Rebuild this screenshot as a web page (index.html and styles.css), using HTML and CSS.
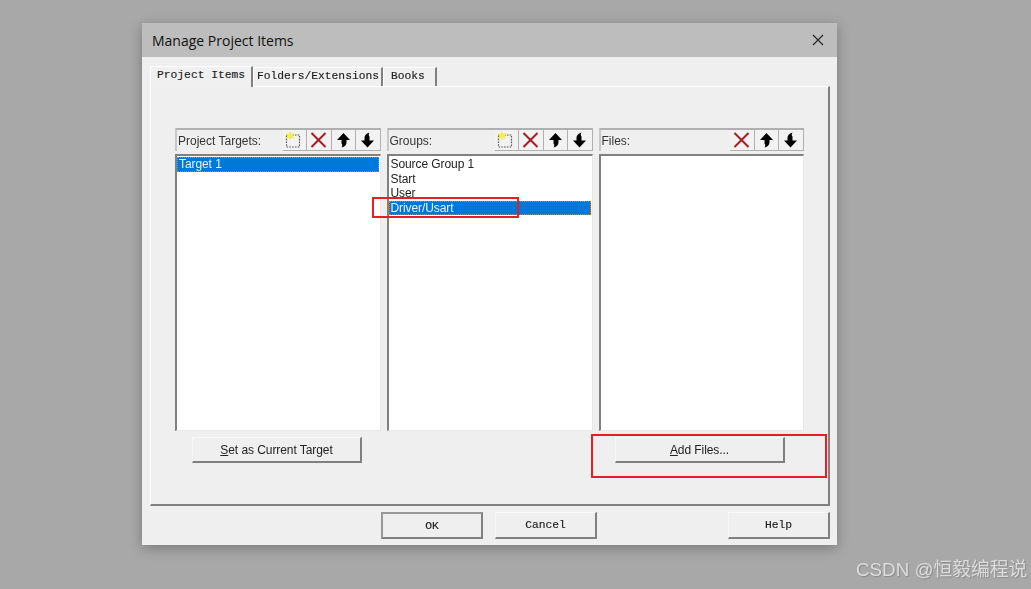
FILE: index.html
```html
<!DOCTYPE html>
<html lang="en">
<head>
<meta charset="utf-8">
<title>Manage Project Items</title>
<link rel="stylesheet" href="styles.css">
</head>
<body>
<svg class="defs" width="0" height="0" aria-hidden="true">
  <defs>
    <symbol id="i-new" viewBox="0 0 20 20">
      <rect x="2.500" y="5" width="13" height="12" fill="none" stroke="#555" stroke-width="1.2" stroke-dasharray="1.6 1.2"/>
      <path d="M6 1 7.200 3.800 10.500 3 8.500 5.800 10.500 8.500 7.200 7.800 6 11 4.800 7.800 1.500 8.500 3.500 5.800 1.500 3 4.800 3.800Z" fill="#eef04e"/>
    </symbol>
    <symbol id="i-del" viewBox="0 0 20 20">
      <path d="M2.500 3 16.500 17M16.500 3 2.500 17" fill="none" stroke="#a51c24" stroke-width="2"/>
    </symbol>
    <symbol id="i-up" viewBox="0 0 20 20">
      <path d="M10.500 3 17 10H13.500V12C13.500 15 12 16.500 8.500 17.500 9.500 16 9.500 14.500 8.500 13.500V10H4Z" fill="#000"/>
    </symbol>
    <symbol id="i-down" viewBox="0 0 20 20">
      <path d="M9.500 17.500 3 10.500H6.500V8C6.500 5.500 8 3.500 11.500 2.500 10.500 4 10.500 5.500 11.500 6.500V10.500H16Z" fill="#000"/>
    </symbol>
  </defs>
</svg>
<main class="dialog">
  <header class="titlebar">
    <span class="title">Manage Project Items</span>
    <svg class="close" width="14" height="14" viewBox="0 0 14 14"><path d="M2 2 12 12M12 2 2 12" stroke="#222" stroke-width="1.100" fill="none"/></svg>
  </header>
  <div class="content">
    <nav class="tabs">
      <span class="tab tab-active">Project Items</span>
      <span class="tab tab-folders">Folders/Extensions</span>
      <span class="tab tab-books">Books</span>
    </nav>
    <section class="panel">
      <div class="columns">
        <div class="col">
          <div class="col-head">
            <span class="col-label">Project Targets:</span>
            <span class="tools">
              <span class="tool"><svg width="20" height="20"><use href="#i-new"/></svg></span>
              <span class="tool"><svg width="20" height="20"><use href="#i-del"/></svg></span>
              <span class="tool"><svg width="20" height="20"><use href="#i-up"/></svg></span>
              <span class="tool"><svg width="20" height="20"><use href="#i-down"/></svg></span>
            </span>
          </div>
          <ul class="list">
            <li class="selected">Target 1</li>
          </ul>
        </div>
        <div class="col">
          <div class="col-head">
            <span class="col-label">Groups:</span>
            <span class="tools">
              <span class="tool"><svg width="20" height="20"><use href="#i-new"/></svg></span>
              <span class="tool"><svg width="20" height="20"><use href="#i-del"/></svg></span>
              <span class="tool"><svg width="20" height="20"><use href="#i-up"/></svg></span>
              <span class="tool"><svg width="20" height="20"><use href="#i-down"/></svg></span>
            </span>
          </div>
          <ul class="list">
            <li>Source Group 1</li>
            <li>Start</li>
            <li>User</li>
            <li class="selected">Driver/Usart</li>
          </ul>
        </div>
        <div class="col">
          <div class="col-head">
            <span class="col-label">Files:</span>
            <span class="tools">
              <span class="tool"><svg width="20" height="20"><use href="#i-del"/></svg></span>
              <span class="tool"><svg width="20" height="20"><use href="#i-up"/></svg></span>
              <span class="tool"><svg width="20" height="20"><use href="#i-down"/></svg></span>
            </span>
          </div>
          <ul class="list"></ul>
        </div>
      </div>
      <div class="actions">
        <button class="btn btn-sans btn-target"><span><u>S</u>et as Current Target</span></button>
        <button class="btn btn-sans btn-add"><span><u>A</u>dd Files...</span></button>
      </div>
    </section>
    <footer class="footer">
      <button class="btn btn-mono btn-ok">OK</button>
      <button class="btn btn-mono btn-cancel">Cancel</button>
      <button class="btn btn-mono btn-help">Help</button>
    </footer>
    <div class="mark mark-group"></div>
    <div class="mark mark-add"></div>
  </div>
</main>
<div class="watermark">CSDN @恒毅编程说</div>
</body>
</html>
```

FILE: styles.css
```css
* { box-sizing: border-box; }
html, body { margin: 0; height: 100%; }
body {
  width: 1031px;
  height: 589px;
  overflow: hidden;
  background: #a8a8a8;
  padding: 23px 0 0 142px;
  position: relative;
  font-family: "Liberation Sans", sans-serif;
}
.defs { position: absolute; }
.dialog {
  width: 695px;
  height: 522px;
  background: #efefef;
  box-shadow: 0 3px 12px rgba(0,0,0,.28);
  display: flex;
  flex-direction: column;
  filter: blur(.45px);
}
.titlebar {
  height: 34px;
  background: #bdbdbd;
  display: flex;
  align-items: center;
  justify-content: space-between;
  padding: 0 12px 0 10px;
  flex: none;
}
.title { font: 14px "Open Sans", sans-serif; color: #111; }
.close { display: block; }
.content { position: relative; flex: 1; padding: 8px 7px 0 8px; }
.tabs { display: flex; align-items: flex-end; height: 21px; }
.tab {
  font: 11.3px "Liberation Mono", monospace;
  -webkit-text-stroke: .15px #222;
  color: #222;
  white-space: nowrap;
  height: 19px;
  line-height: 17px;
  background: #f0f0f0;
  border-top: 1px solid #fff;
  border-left: 1px solid #fff;
  border-right: 2px solid #808080;
}
.tab-active { height: 21px; width: 103px; padding-left: 6px; margin-bottom: -1px; position: relative; z-index: 1; }
.tab-folders { width: 130px; padding-left: 3px; }
.tab-books { width: 54px; padding-left: 7px; }
.panel {
  width: 680px;
  height: 420px;
  border-top: 1px solid #fff;
  border-left: 1px solid #fff;
  border-right: 2px solid #808080;
  border-bottom: 2px solid #808080;
  padding: 41px 0 0 24px;
}
.columns { display: flex; gap: 6px; }
.col { width: 205.500px; display: flex; flex-direction: column; gap: 3px; }
.col:nth-child(2) { width: 206px; }
.col:nth-child(3) { width: 205px; }
.col-head {
  height: 23px;
  border-top: 2px solid #b0b0b0;
  border-left: 2px solid #c8c8c8;
  display: flex;
  align-items: center;
  justify-content: space-between;
}
.col-label { font-size: 12px; color: #333; padding-left: 1px; }
.tools { display: flex; height: 21px; }
.tool {
  width: 24.500px;
  height: 21px;
  background: #f2f2f2;
  border-right: 1px solid #b0b0b0;
  border-bottom: 1px solid #b0b0b0;
  display: flex;
  align-items: center;
  justify-content: center;
}
.list {
  list-style: none;
  margin: 0;
  padding: 1px 1px 0 0;
  height: 277px;
  background: #fff;
  border-top: 2px solid #808080;
  border-left: 2px solid #808080;
  border-right: 1px solid #e8e8e8;
  border-bottom: 1px solid #e8e8e8;
}
.list li {
  height: 14.500px;
  line-height: 14.500px;
  font-size: 12px;
  letter-spacing: -.08px;
  color: #222;
  padding-left: 2px;
}
.list li.selected { background: #0078d7; color: #e8f2fb; outline: 1px dotted #b08a50; outline-offset: -1px; }
.actions { display: flex; justify-content: space-between; padding: 6px 0 0 17px; width: 610px; }
.btn {
  display: flex;
  align-items: center;
  justify-content: center;
  background: #efefef;
  border: 1px solid #f8f8f8;
  border-right: 2px solid #808080;
  border-bottom: 2px solid #808080;
  padding: 0;
  height: 26px;
  color: #222;
}
.btn-sans { width: 170px; font: 12px "Liberation Sans", sans-serif; letter-spacing: -.07px; }
.footer { display: flex; padding: 6px 0 0 231px; }
.btn-mono { width: 102px; height: 27px; font: 11.300px "Liberation Mono", monospace; -webkit-text-stroke: .15px #222; }
.btn-ok { border: 2px solid #808080; border-top-color: #999; border-left-color: #999; }
.btn-cancel { margin-left: 12px; }
.btn-help { margin-left: 131px; }
.mark { position: absolute; border: 2px solid #ea1c28; pointer-events: none; }
.mark-group { left: 230px; top: 140px; width: 147px; height: 21px; }
.mark-add { left: 449px; top: 377px; width: 236px; height: 44px; }
.watermark {
  position: absolute;
  left: 856px;
  top: 557px;
  font: 18.800px "Liberation Sans", "Noto Sans CJK SC", sans-serif;
  line-height: 26px;
  color: #dcdcdc;
  text-shadow: 1px 1px 1px #8a8a8a;
  white-space: nowrap;
}
```
